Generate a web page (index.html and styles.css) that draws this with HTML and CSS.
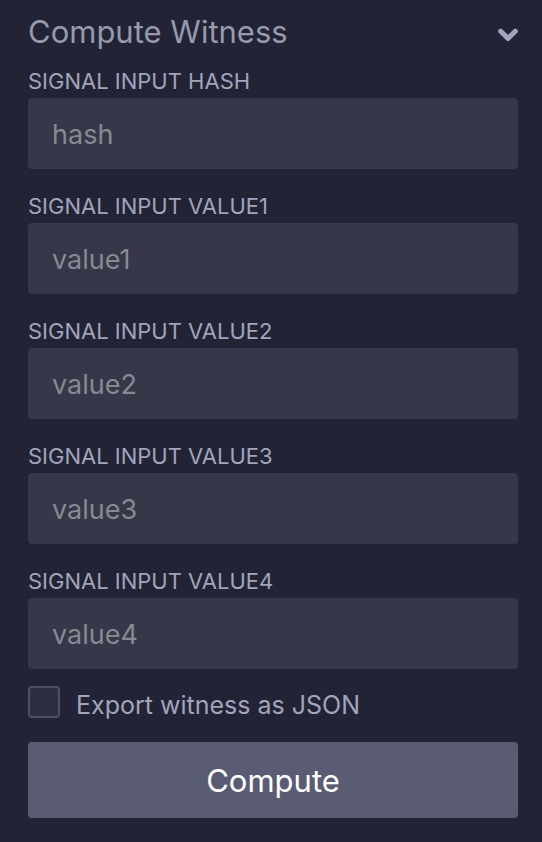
FILE: index.html
```html
<!DOCTYPE html>
<html lang="en">
<head>
<meta charset="utf-8">
<meta name="viewport" content="width=device-width, initial-scale=1">
<title>Compute Witness</title>
<link rel="stylesheet" href="styles.css">
</head>
<body>
<form class="panel">
  <button type="button" class="panel-header" aria-expanded="true">
    <span>Compute Witness</span>
    <svg class="chevron" viewBox="0 0 20 14" aria-hidden="true"><path d="M2.7 3.2 L10 10.4 L17.3 3.2"/></svg>
  </button>
  <div class="fields">
    <div class="field"><label for="hash">SIGNAL INPUT HASH</label><input id="hash" type="text" placeholder="hash"></div>
    <div class="field"><label for="value1">SIGNAL INPUT VALUE1</label><input id="value1" type="text" placeholder="value1"></div>
    <div class="field"><label for="value2">SIGNAL INPUT VALUE2</label><input id="value2" type="text" placeholder="value2"></div>
    <div class="field"><label for="value3">SIGNAL INPUT VALUE3</label><input id="value3" type="text" placeholder="value3"></div>
    <div class="field"><label for="value4">SIGNAL INPUT VALUE4</label><input id="value4" type="text" placeholder="value4"></div>
  </div>
  <div class="export"><input id="export" type="checkbox"><label for="export">Export witness as JSON</label></div>
  <button type="submit" class="compute">Compute</button>
</form>
</body>
</html>
```

FILE: styles.css
```css
* { box-sizing: border-box; }
body {
  margin: 0;
  background: #222334;
  color: #a2a3bd;
  font-family: Inter, "Liberation Sans", sans-serif;
}
button, input { font: inherit; }
.panel { padding: 12px 24px 24px 28px; }
.panel-header {
  display: flex;
  align-items: center;
  justify-content: space-between;
  width: 100%;
  padding: 0;
  border: 0;
  background: none;
  color: #959bad;
  font-size: 31px;
  line-height: 40px;
}
.chevron {
  width: 20px;
  height: 14px;
  margin-top: 6px;
  fill: none;
  stroke: #a2a3bd;
  stroke-width: 5;
  stroke-linecap: round;
  stroke-linejoin: round;
}
.fields { display: grid; gap: 24px; padding-top: 16px; }
.field label {
  display: block;
  margin-bottom: 4px;
  font-size: 22px;
  line-height: 26px;
}
.field input {
  display: block;
  width: 100%;
  height: 71px;
  padding: 2px 24px 0;
  border: 0;
  border-radius: 4px;
  background: #363749;
  color: #a2a3bd;
  font-size: 27px;
}
.field input::placeholder { color: #858b92; opacity: 1; }
.export {
  display: flex;
  align-items: flex-end;
  gap: 16px;
  padding: 17px 0 24px;
  font-size: 25px;
  line-height: 26px;
}
.export input {
  appearance: none;
  width: 32px;
  height: 32px;
  margin: 0;
  border: 2px solid #4e5066;
  border-radius: 4px;
  background: #2d2e40;
}
.export input:checked { background: #a2a3bd; }
.compute {
  width: 100%;
  height: 76px;
  padding: 0;
  border: 0;
  border-radius: 4px;
  background: #595c73;
  color: #fff;
  font-size: 31px;
}
```
